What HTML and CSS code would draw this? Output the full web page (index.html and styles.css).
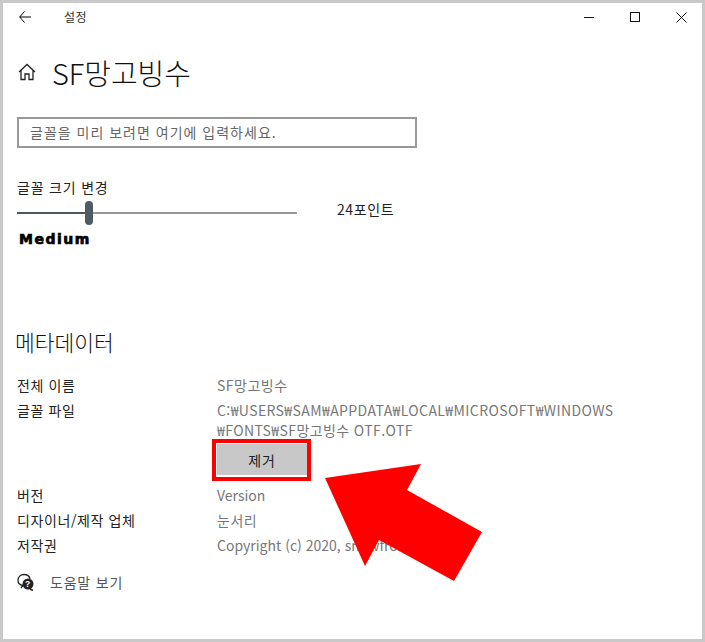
FILE: index.html
```html
<!DOCTYPE html>
<html lang="ko">
<head>
<meta charset="utf-8">
<title>설정</title>
<link rel="stylesheet" href="styles.css">
</head>
<body>
<div class="window">
  <header class="titlebar">
    <svg class="back" width="12" height="12" viewBox="0 0 12 12"><path d="M5.500 .5.700 6 5.500 11.500M.7 6H12" fill="none" stroke="#000" stroke-width="1"/></svg>
    <span class="apptitle">설정</span>
    <div class="controls">
      <svg width="10" height="10" viewBox="0 0 10 10"><path d="M0 5.500H10" stroke="#111" stroke-width="1"/></svg>
      <svg width="10" height="10" viewBox="0 0 10 10"><rect x=".5" y=".5" width="9" height="9" fill="none" stroke="#111"/></svg>
      <svg width="11" height="11" viewBox="0 0 11 11"><path d="M.5.5l10 10M10.500.5l-10 10" stroke="#111" stroke-width="1" fill="none"/></svg>
    </div>
  </header>
  <main class="content">
    <div class="heading">
      <svg class="home" width="18" height="18" viewBox="0 0 18 18"><path d="M1 9 9 1.500 17 9M3 7.500V16.500H7V11H11V16.500H15V7.500" fill="none" stroke="#222" stroke-width="1.300"/></svg>
      <h1>SF망고빙수</h1>
    </div>
    <div class="preview">글꼴을 미리 보려면 여기에 입력하세요.</div>
    <div class="sizelabel">글꼴 크기 변경</div>
    <div class="sizerow">
      <div class="slider"><span class="fill"></span><span class="thumb"></span><span class="rest"></span></div>
      <span class="points">24포인트</span>
    </div>
    <div class="weight">Medium</div>
    <h2>메타데이터</h2>
    <dl class="meta">
      <dt>전체 이름</dt><dd class="ko">SF망고빙수</dd>
      <dt>글꼴 파일</dt>
      <dd class="path">C:₩USERS₩SAM₩APPDATA₩LOCAL₩MICROSOFT₩WINDOWS<br>₩FONTS₩SF망고빙수 OTF.OTF
        <div class="btnwrap"><button class="remove">제거</button></div>
      </dd>
      <dt>버전</dt><dd>Version</dd>
      <dt>디자이너/제작 업체</dt><dd class="ko">눈서리</dd>
      <dt>저작권</dt><dd>Copyright (c) 2020, snowfrost</dd>
    </dl>
    <div class="help">
      <svg width="18" height="18" viewBox="0 0 18 18"><path d="M6 12.500C3 12 1 10 1 7.200 1 4 3.500 1.500 7 1.500c3 0 5.500 2 6 4.500M6 12.500 4 15" fill="none" stroke="#222" stroke-width="1.300"/><circle cx="11" cy="11" r="5.500" fill="#222"/><path d="M13 16l3 1.500" stroke="#222" stroke-width="1.500"/><text x="11" y="14" font-size="8.500" font-weight="700" fill="#fff" text-anchor="middle" font-family="Liberation Sans">?</text></svg>
      <span>도움말 보기</span>
    </div>
  </main>
  <svg class="arrow" width="170" height="130" viewBox="0 0 170 130"><polygon points="1,20 97,6 83,32 158,74 130,123 55,82 41,108" fill="#f00"/></svg>
</div>
</body>
</html>
```

FILE: styles.css
```css
* { box-sizing: border-box; }
html, body { margin: 0; padding: 0; }
body {
  width: 705px;
  height: 642px;
  background: #fff;
  font-family: "Noto Sans CJK KR", "Open Sans", sans-serif;
  color: #222;
  overflow: hidden;
}
.window {
  position: relative;
  width: 705px;
  height: 642px;
  border: 3px solid #c9c9c9;
  background: #fff;
}
.titlebar {
  display: flex;
  align-items: center;
  height: 28px;
  padding-left: 16px;
}
.back { display: block; }
.apptitle {
  margin-left: 33px;
  font-size: 12px;
  letter-spacing: .5px;
  line-height: 28px;
  color: #333;
}
.controls {
  display: flex;
  align-items: center;
  gap: 36px;
  margin-left: auto;
  padding-right: 15px;
}
.controls svg { display: block; }
.content { padding: 0 14px; }
.heading {
  display: flex;
  align-items: center;
  gap: 16px;
  height: 40px;
  margin-top: 21px;
  padding-left: 1px;
}
.home { display: block; }
h1 {
  margin: 0;
  font-size: 29px;
  font-weight: 300;
  line-height: 40px;
  color: #111;
}
.preview {
  width: 400px;
  height: 31px;
  margin-top: 25px;
  padding-left: 11px;
  border: 2px solid #999;
  font-size: 14px;
  letter-spacing: 1px;
  line-height: 26px;
  color: #666;
}
.sizelabel {
  margin-top: 29px;
  font-size: 14px;
  letter-spacing: .8px;
  line-height: 20px;
  color: #222;
}
.sizerow {
  display: flex;
  align-items: center;
  height: 26px;
  margin-top: 3px;
}
.slider {
  display: flex;
  align-items: center;
  width: 280px;
}
.fill { width: 68px; height: 2px; background: #4d565d; }
.thumb { width: 8px; height: 24px; border-radius: 4px; background: #4f5a63; }
.rest { flex: 1; height: 2px; background: #999; }
.points {
  margin-left: 40px;
  padding-bottom: 8px;
  font-size: 14px;
  letter-spacing: .6px;
  line-height: 20px;
  color: #222;
}
.weight {
  margin-top: 4px;
  padding-left: 2px;
  font-family: "DejaVu Sans", sans-serif;
  font-size: 14px;
  font-weight: 700;
  line-height: 18px;
  letter-spacing: 1.500px;
  color: #000;
  -webkit-text-stroke: .7px #000;
}
h2 {
  margin: 80px 0 0 -2px;
  font-size: 21.500px;
  font-weight: 300;
  line-height: 28px;
  color: #111;
}
.meta {
  display: grid;
  grid-template-columns: 200px 1fr;
  grid-auto-rows: minmax(25px, auto);
  margin: 19px 0 0;
  font-size: 14px;
  line-height: 20px;
}
.meta dt { color: #222; letter-spacing: .6px; }
.meta dd { margin: 0; color: #777; }
.meta .ko { letter-spacing: .5px; }
.meta .path { letter-spacing: .4px; line-height: 20px; }
.btnwrap {
  width: 99px;
  height: 42px;
  margin: -1px 0 4px -5px;
  padding: 1px;
  border: 4px solid #f00;
  background: #fff;
}
.remove {
  display: block;
  width: 90px;
  height: 31px;
  padding: 0;
  border: 0;
  background: #c8c8c8;
  font-family: inherit;
  font-size: 14px;
  letter-spacing: .8px;
  color: #222;
}
.help {
  display: flex;
  align-items: center;
  gap: 15px;
  height: 24px;
  margin-top: 10px;
  font-size: 14px;
  letter-spacing: .8px;
  color: #555;
}
.help svg { display: block; }
.arrow {
  position: absolute;
  left: 321px;
  top: 455px;
}
```
